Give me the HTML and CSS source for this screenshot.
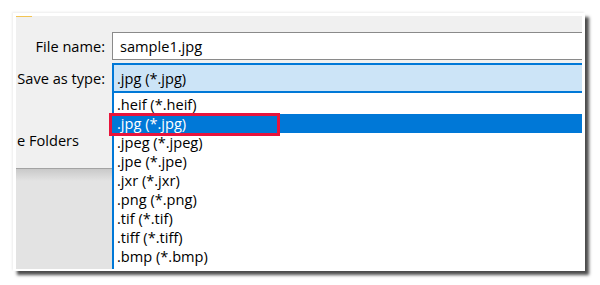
FILE: index.html
```html
<!DOCTYPE html>
<html>
<head>
<meta charset="utf-8">
<link rel="stylesheet" href="styles.css">
</head>
<body>
<div class="frame">
  <div class="dialog">
    <div class="topstrip"><span class="mark"></span></div>
    <div class="row name-row">
      <div class="label">File name:</div>
      <div class="input">sample1.jpg</div>
    </div>
    <div class="row type-row">
      <div class="label">Save as type:</div>
      <div class="select">.jpg (*.jpg)</div>
    </div>
    <div class="row lower">
      <div class="side">
        <div class="folders">e Folders</div>
        <div class="panel"></div>
      </div>
      <ul class="list">
        <li>.heif (*.heif)</li>
        <li class="sel"><span class="box"></span>.jpg (*.jpg)</li>
        <li>.jpeg (*.jpeg)</li>
        <li>.jpe (*.jpe)</li>
        <li>.jxr (*.jxr)</li>
        <li>.png (*.png)</li>
        <li>.tif (*.tif)</li>
        <li>.tiff (*.tiff)</li>
        <li>.bmp (*.bmp)</li>
      </ul>
    </div>
  </div>
</div>
</body>
</html>
```

FILE: styles.css
```css
* { box-sizing: border-box; }
html, body { margin: 0; padding: 0; background: #ffffff; }
body {
  width: 600px;
  height: 285px;
  overflow: hidden;
  font-family: "Open Sans", "Noto Sans", sans-serif;
  font-size: 14.6px;
  color: #000;
}
.frame {
  margin: 13px 0 0 13px;
  width: 572px;
  height: 258px;
  background: #fff;
  padding: 3px 3px 2px 3px;
  box-shadow: 4px 4px 3px rgba(0,0,0,0.7), -1px -1px 2px rgba(0,0,0,0.08);
}
.dialog {
  width: 566px;
  height: 253px;
  background: #f0f0f0;
  display: flex;
  flex-direction: column;
  overflow: hidden;
}
.topstrip {
  height: 16px;
  flex: none;
}
.mark {
  display: block;
  width: 16px;
  height: 1px;
  background: #f2c453;
}
.row { display: flex; flex: none; }
.label {
  width: 96px;
  padding-right: 7px;
  text-align: right;
  line-height: 28px;
  white-space: nowrap;
}
.name-row { height: 28px; }
.input {
  flex: 1;
  background: #fff;
  border: 1px solid #8a8a8a;
  border-right: none;
  padding-left: 7px;
  line-height: 26px;
}
.type-row { margin-top: 3px; height: 30px; }
.type-row .label { line-height: 30px; }
.select {
  flex: 1;
  background: #cce4f7;
  border: 2px solid #0078d7;
  border-right: none;
  padding-left: 3px;
  line-height: 26px;
}
.lower { flex: 1; min-height: 0; }
.side {
  width: 96px;
  display: flex;
  flex-direction: column;
}
.folders {
  height: 75px;
  padding-top: 37px;
  line-height: 20px;
  padding-left: 1px;
}
.panel {
  flex: 1;
  border-top: 1px solid #a3a3a3;
  background: linear-gradient(#c9c9c9, #e3e3e3 12px, #e3e3e3);
}
.list {
  flex: 1;
  margin: 0;
  padding: 2px 0 0 0;
  list-style: none;
  background: #fff;
  border-left: 2px solid #0078d7;
}
.list li {
  height: 19px;
  line-height: 19px;
  padding-left: 3px;
  position: relative;
}
.list li.sel {
  background: #0078d7;
  color: #fff;
}
.box {
  position: absolute;
  left: -5px;
  top: -1px;
  width: 171px;
  height: 23px;
  border: 3px solid #e8143c;
}
```
